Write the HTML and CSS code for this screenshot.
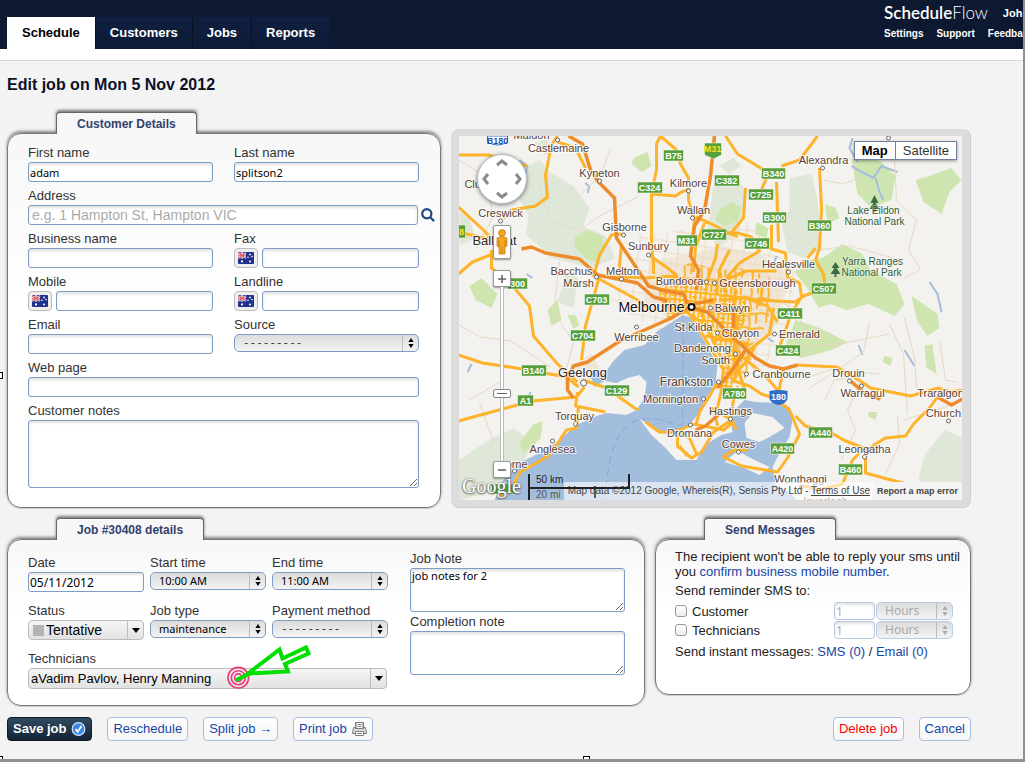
FILE: index.html
```
<!DOCTYPE html>
<html lang="en">
<head>
<meta charset="utf-8">
<title>ScheduleFlow - Edit job</title>
<link rel="stylesheet" href="styles.css">
</head>
<body>
<svg class="sprite" aria-hidden="true">
  <symbol id="updown" viewBox="0 0 6 10"><path d="M3 0 5.6 4H.4ZM3 10 .4 6h5.2Z"/></symbol>
  <symbol id="down" viewBox="0 0 8 5"><path d="M0 0h8L4 5Z"/></symbol>
  <symbol id="flag" viewBox="0 0 16 12">
    <rect width="16" height="12" rx="1" fill="#20338c"/>
    <path d="M0 1l8 5M8 1 0 6" stroke="#fff" stroke-width="1.6"/>
    <path d="M4 0v6.500M0 3.300h8" stroke="#fff" stroke-width="2.400"/>
    <path d="M4 0v6.500M0 3.300h8M0 1l8 5M8 1 0 6" stroke="#e2505e" stroke-width="1"/>
    <g fill="#fff"><circle cx="4" cy="9.400" r="1.100"/><circle cx="12" cy="2.400" r=".9"/><circle cx="10" cy="5.300" r=".8"/><circle cx="14" cy="4.600" r=".8"/><circle cx="12" cy="9.500" r="1"/></g>
  </symbol>
</svg>

<div class="page">
  <header class="topbar">
    <nav class="tabs">
      <a class="tab active" href="#">Schedule</a>
      <a class="tab" href="#">Customers</a>
      <a class="tab" href="#">Jobs</a>
      <a class="tab" href="#">Reports</a>
    </nav>
    <div class="account">
      <div class="account-row brand-row"><span class="brand">Schedule<span class="thin">Flow</span></span><a class="user" href="#">John</a></div>
      <nav class="account-row links"><a href="#">Settings</a><a href="#">Support</a><a href="#">Feedback</a></nav>
    </div>
  </header>
  <div class="strip"></div>

  <main class="content">
    <h1>Edit job on Mon 5 Nov 2012</h1>

    <div class="row row-top">
      <section class="panel">
        <h2 class="panel-tab">Customer Details</h2>
        <div class="card customer">
          <div class="field"><label for="first">First name</label><input id="first" type="text" value="adam"></div>
          <div class="field"><label for="last">Last name</label><input id="last" type="text" value="splitson2"></div>
          <div class="field wide"><label for="address">Address</label>
            <div class="with-search"><input id="address" class="large" type="text" placeholder="e.g. 1 Hampton St, Hampton VIC">
              <button type="button" class="search" aria-label="Search address"><svg viewBox="0 0 14 14"><circle cx="5.800" cy="5.800" r="4.600"/><path d="m9.300 9.300 3.800 3.800"/></svg></button></div>
          </div>
          <div class="field"><label for="business">Business name</label><input id="business" type="text"></div>
          <div class="field"><label for="fax">Fax</label><div class="phone"><button type="button" class="flag" aria-label="Australia"><svg><use href="#flag"/></svg></button><input id="fax" type="text"></div></div>
          <div class="field"><label for="mobile">Mobile</label><div class="phone"><button type="button" class="flag" aria-label="Australia"><svg><use href="#flag"/></svg></button><input id="mobile" type="text"></div></div>
          <div class="field"><label for="landline">Landline</label><div class="phone"><button type="button" class="flag" aria-label="Australia"><svg><use href="#flag"/></svg></button><input id="landline" type="text"></div></div>
          <div class="field"><label for="email">Email</label><input id="email" type="text"></div>
          <div class="field"><label for="source">Source</label><div class="select"><select id="source" class="blank"><option>---------</option></select><svg><use href="#updown"/></svg></div></div>
          <div class="field wide"><label for="web">Web page</label><input id="web" type="text"></div>
          <div class="field wide"><label for="notes">Customer notes</label><textarea id="notes" class="tall"></textarea></div>
        </div>
      </section>

      <section class="map" aria-label="Map">
        <div class="map-view">
          <svg class="map-art" viewBox="459 136 504 364" preserveAspectRatio="xMidYMid slice">
            <defs>
              <pattern id="streets" width="10" height="9" patternUnits="userSpaceOnUse" patternTransform="rotate(6)">
                <path d="M0 2h10M3 0v9M0 7h5M8 2v7" fill="none" stroke="#ffb41c" stroke-width="2"/>
              </pattern>
              <pattern id="suburbs" width="17" height="15" patternUnits="userSpaceOnUse" patternTransform="rotate(4)">
                <path d="M0 4l8 2 9-2M6 0l-1 8 1 7M12 5v10" fill="none" stroke="#fdb32a" stroke-width="2"/>
              </pattern>
              <pattern id="lanes" width="13" height="11" patternUnits="userSpaceOnUse" patternTransform="rotate(8)">
                <path d="M0 3h13M5 0v11" fill="none" stroke="#ecd9bf" stroke-width="1"/>
              </pattern>
            </defs>
            <rect x="459" y="136" width="504" height="364" fill="#f4f2ee"/>
            <g fill="#dfe8d8">
              <path d="M518 172l22-12 10 12 24 14 16 22-6 18-30 8-24-18-14-22zM530 212l34 6 42 18 10 22-24 10-40-10-26-24zM568 268l10 10-4 30-16-6zM714 185l20-8 14 14-8 40-22 18-10-20zM790 178l22-4 6 24 4 52-18 8-16-6-6-30 8-12zM720 166l14-8 8 8-12 8zM535 143l12-4 12 12-14 4zM460 212l10 6 6 20-16 8zM925 455l20-25 18 8v45l-34 6-10-10zM489 440l25-12 20 14-10 20-30 30-35 8v-40z"/>
            </g>
            <g fill="#cfe5b0">
              <path d="M575 238l12-8 16 6 2 14-6 12-12-2-12-14zM470 286l12-8 16 16-6 14-16-8zM634 158l14-6 4 14-10 6-10-8zM720 210l12-8 10 6-4 14-14 4-8-6zM852 160l10-8 20 10 14 14-4 24-20 8-14-14zM930 176l22-8 10 12-12 12-8 22-18-12-8-22zM826 204l10 4 4 10-12 6-2-14zM795 272l14-12 14-2 20-14 20 10 8 16 26 14 8 20-10 12-26-12-22 6-16-6-12 4-10-18zM796 320l24 8 28 14-16 8-30 8-18-8zM912 296l26 18 2 14-12 8-10-14zM925 346l8-2 4 30-10-6zM885 356l8 2-2 8-8-4zM870 412l8 0-2 8-8-4zM548 310l10-10 4 20-10 6zM533 425l10-4-2 18-16 14-6-8zM568 315l8 0 4 10-6 4zM757 222l12 6-2 10-12-4z"/>
            </g>
            <g fill="#efe6d8">
              <path d="M650 262l40-8 34-8 40 10 26 20-10 44-34 40-14 28-10-14 6-24-16-28-22-14-24 8-20-12zM578 362l14-8 8 14-8 14-14-4z"/>
            </g>
            <path fill="url(#lanes)" d="M640 235l110-12 48 52-10 44-28 60-120-60-30-16z"/>

            <path fill="#a3bddd" d="M495 500 505 478 522 462 540 453 557 443 577 425 597 416 608 413 627 415 637 410 645 398 647 382 640 375 628 378 617 383 605 381 595 387 590 373 600 371 608 376 607 371 613 362 625 350 645 345 658 331 673 322 683 315 690 317 697 328 707 345 718 365 716 385 705 400 698 415 690 425 672 434 660 433 645 422 640 419 652 435 665 447 677 460 697 460 705 445 722 435 733 432 731 420 735 410 745 400 757 402 777 403 790 407 793 420 790 437 780 453 773 467 776 478 775 484 790 492 797 500Z"/>
            <path fill="#f4f2ee" d="m725 462 13-11 15 8 17 8-10 8-15-7ZM745 423l8-10 20 4 12 11-15 9-10 5-13-4Z"/>
            <path fill="none" stroke="#8aa5d3" stroke-dasharray="8 4" d="M605 500c4-32 6-72 34-80 24-6 40 10 44 4l1-104"/>
            <g fill="none" stroke="#a3bddd" stroke-width="2">
              <path d="M852 166l10 6 12 6 8-12 16 6M876 178l4 14 4 8M853 138l-3 10 8 14M586 183l4 4-2 6M930 282l8 12 4 18M905 350l10 16M859 345l4 10M773 268l4-12M527 274l6 4M531 392l-4 10M468 372l4-8M818 432l0 2M768 338l6 4M520 160l8 6-2 8"/>
            </g>
            <g fill="none" stroke="#e6d8c4">
              <path d="M459 160l30 18 4 40-16 30M540 188l10 32 30 10 20-14 40-20M610 150l-8 24-20 20M560 262l-6 50 20 30-8 30M459 325l22 12 30 4 40 26M470 400l34-20M480 402l14 40-24 30M870 322l-6 30-26 18-28 18M890 324l14 30 4 60M905 318l10 40 2 30M862 380l-14 30 8 20-14 30M825 400l10-20 30-4M898 416l2 28-14 30M895 160l2 40 20 20-8 30 12 20-16 8M940 340l6 40 12 2M824 180l20 4 20-8M820 250l30-4 44 12M780 300l14 10 20 30M780 348l60-4 50-10M800 380l30-10 50 4M905 420l44-14"/>
            </g>

            <path fill="url(#streets)" d="M658 292 672 276 700 280 728 282 746 296 748 318 738 334 744 366 730 392 722 388 722 354 704 326 690 314 680 314 668 318Z"/>
            <path fill="url(#suburbs)" d="M690 262 720 270 740 268 770 276 774 306 764 330 752 346 752 370 738 388 730 380 736 340 728 300 700 284 660 284Z"/>

            <g fill="none" stroke="#fdb32a" stroke-width="3" stroke-linejoin="round">
              <path d="M459 155l30 0 38 11M459 207l26 24 14 16M459 232l34 8M459 274l14-12 20-8 4-10M492 250l0 18 18 14 20 24 4 30 24 28 20 18M504 218l8-8 24-4 12-9-2-22 6-30 6-9M558 142l18 6 10 20"/>
              <path d="M661 136l-4 8 0 26-5 24 0 50 2 20 0 10M661 136l16 14 4 14 8 14 0 22 6 20-2 18M652 194l24 2 6-4 6-2M726 136l12 18 30 18 14 4M782 166l18-6 18-24M768 176l-8 18M777 182l2 60M772 225v24l14 4 2 24 12 6 2 14-10 16-12 34M746 188l-2 30-14 17M820 168l2 40-2 40-4 12 8 14 2 14-22 8-8 6-40-2M816 248l-8 10"/>
              <path d="M696 217l14 6 28 14M710 234l28-1 14 4 8 14-20 12-14 16M777 271l-30 0-24 10M706 220l-10 28-2 24M718 244l-2 14-8 22M730 250l-10 20 4 18M600 276l-14 50-4 34M606 276l40 2 30-2M598 278l40 22 16 12M622 234l-10 1-12 20-6 22M622 244l-2 22 2 12M648 254l20 14 10 8"/>
              <path d="M459 355l24 8 40 6 44 8 12 10M459 421l44-12 30-8 44-4 8-10M583 380l24 8 28 20 4 2M578 392l-2 14 30 6M579 406l-2 22-10 2-8 12-10 14-28 16-8 14-14 12"/>
              <path d="M742 356l24 20 12 14M784 368l-4 20-2 12 12 10 10 24-12 24-10 14-36-6-18-9 10-7 14 0M796 416l10 10 28 8 10 6 10 4 14 6M732 380l18 6 12 8 18 6M863 450l-10 10-10 24-24 6-14-4M866 455l0 18 22 6 16 4M866 452l10-8 10-6 20-2 8-12 16-16 10-14 22-4"/>
              <path d="M797 365l40 2 24 14 10 7 40 8 28-8 18 6M718 382l-8 14-10 16-4 14M715 388l30-24 10-16M722 390l-6 26 2 10M735 394l-4 24 6 12M712 408l20 12-18 12-12 20-10 6-14-12 0-16 12 8 8 18M680 446l8 10M694 424l30 6 10-8M646 422l14 10 16 0 18-8"/>
              <path d="M690 314l14 22 20 34-2 20M700 308l10 26 12 24M706 336l24 4 20 6M738 306l-4 50 12 36M720 300l26-2 22 8 10 16M750 350l20-16 4-26M676 305l30 20M764 280l-4 26"/>
            </g>
            <g fill="none" stroke="#ee8c2b" stroke-width="3.500" stroke-linejoin="round">
              <path d="M569 136l14 8 8 26 8 12 16 16 2 40 8 12 24 36 20 6M522 249l10-2 14 6 34 6 18 16 40 8 16 14 14 4M715 136l-4 40-6 34-10 16-4 30 8 14-2 20M692 306l-20 12-36 16-14 6-34 22-14 4-6 14 0 10 6 8M694 308l14 4 24 24 24 22 14 8 14 3 14-4M734 304l0 24M746 350l-12 18-16 20M722 412l-16 14-10 4M851 381l14 12 16 6M938 397l14 8 11-6M660 290l24 4 4 10M694 304l20-4"/>
            </g>

            <g class="city-dots">
              <circle cx="558" cy="140" r="2"/><circle cx="600" cy="181" r="2"/><circle cx="689" cy="191" r="2"/><circle cx="501" cy="221" r="2"/><circle cx="693" cy="218" r="2"/><circle cx="624" cy="235" r="2"/><circle cx="649" cy="255" r="2"/><circle cx="597" cy="277" r="2"/><circle cx="622" cy="279" r="2"/><circle cx="707" cy="282" r="2"/><circle cx="715" cy="283" r="2"/><circle cx="637" cy="327" r="2"/><circle cx="584" cy="383" r="3"/><circle cx="576" cy="424" r="2"/><circle cx="553" cy="441" r="2"/><circle cx="823" cy="168" r="2"/><circle cx="789" cy="272" r="2"/><circle cx="711" cy="308" r="2"/><circle cx="718" cy="333" r="2"/><circle cx="775" cy="334" r="2"/><circle cx="736" cy="354" r="2"/><circle cx="747" cy="374" r="2"/><circle cx="719" cy="382" r="2"/><circle cx="704" cy="399" r="2"/><circle cx="731" cy="419" r="2"/><circle cx="691" cy="425" r="2"/><circle cx="739" cy="452" r="2"/><circle cx="850" cy="381" r="2"/><circle cx="862" cy="386" r="2"/><circle cx="865" cy="457" r="2"/><circle cx="949" cy="421" r="2"/><circle cx="802" cy="487" r="2"/><circle cx="515" cy="471" r="2"/><circle cx="889" cy="138" r="2"/>
              <circle cx="692" cy="307" r="3" stroke="#111" stroke-width="2"/>
            </g>

            <g class="places">
              <text x="532" y="139">Maldon</text><text x="559" y="152">Castlemaine</text><text x="600" y="177">Kyneton</text><text x="689" y="187">Kilmore</text><text x="482" y="188">Clunes</text>
              <text x="501" y="217">Creswick</text><text x="694" y="214">Wallan</text><text x="625" y="231">Gisborne</text><text x="649" y="250">Sunbury</text>
              <text x="572" y="275">Bacchus</text><text x="579" y="287">Marsh</text><text x="623" y="275">Melton</text><text x="680" y="285">Bundoora</text><text x="758" y="287">Greensborough</text>
              <text x="789" y="268">Healesville</text><text x="824" y="164">Alexandra</text><text x="733" y="312">Balwyn</text><text x="694" y="331">St Kilda</text><text x="741" y="337">Clayton</text><text x="800" y="338">Emerald</text>
              <text x="637" y="341">Werribee</text><text x="703" y="352">Dandenong</text><text x="716" y="364">South</text><text x="782" y="378">Cranbourne</text><text x="671" y="403">Mornington</text>
              <text x="731" y="415">Hastings</text><text x="690" y="437">Dromana</text><text x="739" y="448">Cowes</text><text x="575" y="420">Torquay</text><text x="553" y="453">Anglesea</text><text x="514" y="468">Lorne</text>
              <text x="849" y="377">Drouin</text><text x="863" y="397">Warragul</text><text x="941" y="397">Traralgon</text><text x="944" y="417">Church</text><text x="865" y="453">Leongatha</text><text x="801" y="483">Wonthaggi</text><text x="826" y="505">Inverloch</text>
              <g class="mid"><text x="495" y="245">Ballarat</text><text x="583" y="377">Geelong</text></g>
              <text class="town" x="687" y="386">Frankston</text>
              <text class="capital" x="652" y="312">Melbourne</text>
            </g>
            <g class="parks">
              <path d="M875 195l4 8h-3l4 6h-4v3h-2v-3h-4l4-6h-3zM836 262l4 6h-3l4 6h-4v3h-2v-3h-4l4-6h-3z"/>
              <text x="874" y="214">Lake Eildon</text><text x="875" y="225">National Park</text><text x="873" y="265">Yarra Ranges</text><text x="872" y="276">National Park</text>
            </g>

            <g class="shield-boxes">
              <path d="M664 150h20v11h-20zM638 182h25v11h-25zM715 175h25v11h-25zM762 168h24v11h-24zM749 189h25v11h-25zM763 212h24v11h-24zM808 220h24v11h-24zM677 235h21v11h-21zM702 229h25v11h-25zM745 238h25v11h-25zM812 283h25v11h-25zM778 308h25v11h-25zM776 345h25v11h-25zM585 294h25v11h-25zM571 330h25v11h-25zM522 365h25v11h-25zM605 385h25v11h-25zM518 395h16v11h-16zM723 388h24v11h-24zM809 427h24v11h-24zM771 443h24v11h-24zM839 464h24v11h-24zM508 278h20v11h-20zM492 484h25v10h-25zM459 225h7v13h-7zM705 143h17v12l-8 4-9-4z"/>
            </g>
            <g class="shields">
              <text x="674" y="159">B75</text><text x="650" y="191">C324</text><text x="727" y="184">C382</text><text x="774" y="177">B340</text><text x="761" y="198">C725</text><text x="775" y="221">B300</text><text x="820" y="229">B360</text><text x="687" y="244">M31</text><text x="714" y="238">C727</text><text x="757" y="247">C746</text><text x="824" y="292">C507</text><text x="790" y="317">C411</text><text x="788" y="354">C424</text><text x="597" y="303">C703</text><text x="583" y="339">C704</text><text x="534" y="374">B140</text><text x="617" y="394">C129</text><text x="526" y="404">A1</text><text x="735" y="397">A780</text><text x="821" y="436">A440</text><text x="783" y="452">A420</text><text x="851" y="473">B460</text><text x="518" y="287">300</text>
              <g class="gold"><text x="713" y="152">M31</text><text x="462" y="235">8</text></g>
            </g>
            <path fill="#2f6fc7" d="M770 391q9-2 18 0v8q-2 5-9 6-7-1-9-6z"/>
            <path fill="#fff" stroke="#2f6fc7" d="M488 136h20v6q-10 6-20 0z"/>
            <g class="shields"><text x="779" y="400">180</text><text x="498" y="144" class="blue">B180</text></g>
          </svg>

          <div class="map-type"><button type="button" class="on">Map</button><button type="button">Satellite</button></div>

          <div class="map-nav">
            <svg class="pan" viewBox="0 0 50 50" aria-label="Pan"><circle cx="25" cy="25" r="24.500" fill="#fff" stroke="#bbb"/><path d="m20 11 5-4 5 4M20 39l5 4 5-4M11 20l-4 5 4 5M39 20l4 5-4 5" fill="none" stroke="#8a8a8a" stroke-width="3"/></svg>
            <button type="button" class="pegman" aria-label="Street View"><svg viewBox="0 0 12 26"><g fill="#f5a623" stroke="#b8720b" stroke-width=".7"><path d="M1 9q5-3 10 0v8l-2 1v7H3v-7l-2-1z"/><circle cx="6" cy="4" r="3.400"/><path d="M6 18v7M3 11v7M9 11v7"/></g></svg></button>
            <button type="button" class="zoom-btn" aria-label="Zoom in"><svg viewBox="0 0 10 10"><path d="M1 5h8M5 1v8"/></svg></button>
            <input class="zoom-range" type="range" min="0" max="21" value="8" aria-label="Zoom level">
            <button type="button" class="zoom-btn" aria-label="Zoom out"><svg viewBox="0 0 10 10"><path d="M1 5h8"/></svg></button>
          </div>

          <div class="map-foot">
            <span class="google">Google</span>
            <span class="scale"><span class="km">50 km</span><span class="mi">20 mi</span></span>
            <span class="legal"><span>Map data ©2012 Google, Whereis(R), Sensis Pty Ltd - <a href="#">Terms of Use</a></span><a class="report" href="#">Report a map error</a></span>
          </div>
        </div>
      </section>
    </div>

    <div class="row row-bottom">
      <section class="panel">
        <h2 class="panel-tab">Job #30408 details</h2>
        <div class="card job">
          <div class="job-fields">
            <div class="field"><label for="date">Date</label><input id="date" class="date" type="text" value="05/11/2012"></div>
            <div class="field"><label for="start">Start time</label><div class="select"><select id="start"><option>10:00 AM</option></select><svg><use href="#updown"/></svg></div></div>
            <div class="field"><label for="end">End time</label><div class="select"><select id="end"><option>11:00 AM</option></select><svg><use href="#updown"/></svg></div></div>
            <div class="field"><label for="status">Status</label><div class="select combo status"><span class="swatch"></span><select id="status"><option>Tentative</option></select><svg><use href="#down"/></svg></div></div>
            <div class="field"><label for="type">Job type</label><div class="select"><select id="type"><option>maintenance</option></select><svg><use href="#updown"/></svg></div></div>
            <div class="field"><label for="payment">Payment method</label><div class="select"><select id="payment" class="blank"><option>---------</option></select><svg><use href="#updown"/></svg></div></div>
            <div class="field wide"><label for="techs">Technicians</label><div class="select combo techs"><select id="techs"><option>aVadim Pavlov, Henry Manning</option></select><svg><use href="#down"/></svg>
              <svg class="pointer" viewBox="223 638 90 52"><g fill="none"><g stroke="#ea3a7a" stroke-width="1.600"><circle cx="238.300" cy="677.700" r="10.300"/><circle cx="238.300" cy="677.700" r="7"/><circle cx="238.300" cy="677.700" r="3.800"/></g><path d="M248 673.500 279.500 649.500 282.500 658.500 306 647.500 308.500 653.500 285 664 288 671.500Z" stroke="#00df00" stroke-width="4"/><path d="M236 680 254 672" stroke="#00df00" stroke-width="4"/></g></svg></div></div>
          </div>
          <div class="job-notes">
            <div class="field"><label for="jobnote">Job Note</label><textarea id="jobnote">job notes for 2</textarea></div>
            <div class="field"><label for="donenote">Completion note</label><textarea id="donenote"></textarea></div>
          </div>
        </div>
      </section>

      <section class="panel">
        <h2 class="panel-tab">Send Messages</h2>
        <div class="card messages">
          <p>The recipient won't be able to reply your sms until you <a href="#">confirm business mobile number</a>.</p>
          <p>Send reminder SMS to:</p>
          <div class="reminders">
            <div class="reminder"><input id="rc" type="checkbox"><label for="rc">Customer</label><input type="text" value="1" disabled aria-label="Customer reminder amount"><div class="select off"><select disabled aria-label="Customer reminder unit"><option>Hours</option></select><svg><use href="#updown"/></svg></div></div>
            <div class="reminder"><input id="rt" type="checkbox"><label for="rt">Technicians</label><input type="text" value="1" disabled aria-label="Technician reminder amount"><div class="select off"><select disabled aria-label="Technician reminder unit"><option>Hours</option></select><svg><use href="#updown"/></svg></div></div>
          </div>
          <p>Send instant messages: <a href="#">SMS (0)</a> / <a href="#">Email (0)</a></p>
        </div>
      </section>
    </div>

    <div class="actions">
      <button type="submit" class="btn primary">Save job <svg viewBox="0 0 14 14"><circle cx="7" cy="7" r="6.300" fill="#3b86e8" stroke="#d5e6fb" stroke-width="1.200"/><path d="m4 7.200 2.200 2.600L10 4" fill="none" stroke="#fff" stroke-width="1.800"/></svg></button>
      <button type="button" class="btn">Reschedule</button>
      <button type="button" class="btn">Split job →</button>
      <button type="button" class="btn">Print job <svg viewBox="0 0 15 14"><g fill="#fff" stroke="#7d7d7d"><path d="M3.500 7V.5h8V7M1.500 5.500h12l1 6H.5z" fill="#ddd"/><path d="M4 .5h7v6H4zM3.500 9.500h8v4h-8z"/><path d="M5.500 2.500h4M5.500 4.500h4M5 11.500h5"/></g></svg></button>
      <span class="spacer"></span>
      <button type="button" class="btn danger">Delete job</button>
      <button type="button" class="btn">Cancel</button>
    </div>
  </main>

  <span class="handle left"></span>
  <span class="handle corner"></span>
  <span class="handle bottom"></span>
</div>
</body>
</html>
```
FILE: styles.css
```
* { box-sizing: border-box; }

body {
  margin: 0;
  background: #f3f3f3;
  color: #333;
  font: 13px/16px "Liberation Sans", Arial, sans-serif;
}

a { color: #1446a8; text-decoration: none; }
input, select, textarea, button { font: inherit; color: inherit; margin: 0; }
svg { display: block; }
.sprite { position: absolute; width: 0; height: 0; }

.page {
  position: relative;
  min-height: 100vh;
  border-right: 2px solid #8f9192;
  border-bottom: 3px solid #929292;
  overflow: hidden;
}

/* Header */
.topbar {
  display: flex;
  align-items: flex-end;
  justify-content: space-between;
  height: 49px;
  padding-left: 7px;
  background: #0d1831;
}
.tabs { display: flex; }
.tab {
  padding: 0 14px;
  line-height: 32px;
  font-weight: bold;
  color: #fff;
  background: linear-gradient(#0f2040, #0c1a36);
  border-left: 1px solid #081022;
}
.tab.active { padding: 0 15px; background: #fff; color: #000; border-left: 0; }
.account {
  align-self: stretch;
  width: 139px;
  padding-top: 3px;
  overflow: hidden;
  white-space: nowrap;
}
.account-row { display: flex; gap: 13px; font-size: 11px; font-weight: bold; }
.account-row a { color: #fff; }
.brand-row { align-items: center; gap: 15px; height: 20px; }
.brand { font: 600 17px/20px Lato, sans-serif; color: #fff; }
.brand .thin { font-weight: 300; }
.links { padding-top: 3px; font-size: 10px; }
.strip { height: 12px; background: #fff; border-bottom: 1px solid #c9dadd; }

/* Layout */
.content { padding: 14px 52px 16px 7px; }
h1 { margin: 0 0 17px; font-size: 16px; line-height: 20px; color: #0a1128; }
.row { display: grid; gap: 10px; }
.row-top { grid-template-columns: 434fr 520fr; }
.row-bottom { grid-template-columns: 638fr 316fr; align-items: start; margin-top: 10px; }

/* Panels */
.panel { min-width: 0; }
.panel-tab {
  position: relative;
  z-index: 1;
  width: fit-content;
  height: 22px;
  margin: 0 0 -1px 49px;
  padding: 0 20px;
  font-size: 12px;
  line-height: 22px;
  color: #33416c;
  background: #f7f7f7;
  border: 1px solid #666;
  border-bottom: 0;
  border-radius: 4px 4px 0 0;
  box-shadow: 0 -2px 3px rgba(0, 0, 0, .5);
  clip-path: inset(-8px -8px 0 -8px);
}
.card {
  border: 1px solid #777;
  border-radius: 14px;
  background: linear-gradient(#f7f7f7, #fff 45%);
  box-shadow: 0 -2px 3px rgba(0, 0, 0, .45), 0 1px 1px rgba(0, 0, 0, .15);
}
.customer {
  display: grid;
  grid-template-columns: 1fr 1fr;
  gap: 6px 21px;
  padding: 11px 21px 19px 20px;
}
.wide { grid-column: 1 / -1; }

/* Fields */
.field { display: grid; gap: 1px; align-content: start; min-width: 0; }
input[type="text"], textarea {
  width: 100%;
  min-width: 0;
  height: 20px;
  padding: 0 1px;
  border: 1px solid #7c9dc6;
  border-radius: 3px;
  background: #fff;
  box-shadow: inset 0 2px 3px rgba(0, 0, 0, .12);
  font: 11px/14px "Noto Sans", sans-serif;
  color: #000;
}
textarea { display: block; height: 44px; resize: vertical; }
textarea.tall { height: 68px; }
input.large { padding-left: 3px; font: 14px/18px "Liberation Sans", Arial, sans-serif; }
input.date { font-size: 12px; }
::placeholder { color: #aaa; }
.with-search { display: flex; gap: 3px; margin-right: -16px; align-items: center; }
.search { flex: none; width: 14px; height: 14px; padding: 0; border: 0; background: none; }
.search svg { width: 14px; height: 14px; fill: none; stroke: #1d4a80; stroke-width: 2.2; }
.phone { display: flex; gap: 4px; }
.flag {
  display: grid;
  place-items: center;
  flex: none;
  width: 24px;
  height: 20px;
  padding: 0;
  border: 1px solid #bbb;
  border-radius: 4px;
  background: #eee;
}
.flag svg { width: 16px; height: 12px; }

.select { position: relative; height: 18px; }
.select select {
  display: block;
  width: 100%;
  height: 100%;
  padding: 0 20px 0 8px;
  appearance: none;
  border: 1px solid #7c9dc6;
  border-radius: 5px;
  background: linear-gradient(90deg, transparent calc(100% - 16px), #bbb calc(100% - 16px), #bbb calc(100% - 15px), transparent calc(100% - 15px)), linear-gradient(#dcdcdc, #f3f3f3);
  font: 11px/14px "Noto Sans", sans-serif;
  color: #000;
}
.select .blank { font-family: "Liberation Mono", monospace; color: #333; }
.select svg { position: absolute; top: 4px; right: 5px; width: 6px; height: 10px; pointer-events: none; }
.combo { height: 20px; }
.combo select {
  padding: 0 20px 0 2px;
  border-color: #bbb;
  border-radius: 4px;
  background: linear-gradient(90deg, transparent calc(100% - 16px), #bbb calc(100% - 16px), #bbb calc(100% - 15px), transparent calc(100% - 15px)), linear-gradient(#f5f5f5, #e2e2e2);
  font: 13px/16px "Liberation Sans", Arial, sans-serif;
}
.combo svg { top: 8px; right: 4px; width: 8px; height: 5px; }
.status select { padding-left: 17px; font-size: 14px; }
.swatch { position: absolute; top: 5px; left: 5px; width: 11px; height: 11px; background: #b4b4b4; }
.techs { height: 21px; margin-right: 1px; }
.select .pointer { top: -30px; left: 195px; width: 90px; height: 52px; }

/* Job */
.job { display: grid; grid-template-columns: 360fr 215fr; gap: 22px; padding: 11px 19px 16px 20px; }
.job-fields { display: grid; grid-template-columns: repeat(3, 1fr); gap: 11px 6px; padding-top: 4px; }
.job-notes { display: grid; gap: 2px; align-content: start; }

/* Messages */
.messages { padding: 9px 4px 31px 19px; line-height: 15px; }
.messages p { margin: 0 0 4px; color: #222; }
.reminders { display: grid; gap: 1px; margin: 0 12px 5px 0; }
.reminder { display: flex; align-items: center; color: #222; }
.reminder label { flex: 1; padding-left: 5px; }
.reminder input[type="checkbox"] {
  appearance: none;
  width: 12px;
  height: 12px;
  border: 1px solid #999;
  border-radius: 3px;
  background: linear-gradient(#fff, #eee);
}
.reminder input[type="text"] { width: 41px; height: 18px; margin-right: 1px; border-color: #b9cbe2; font-size: 12px; color: #aaa; }
.off { width: 77px; margin-right: 1px; }
.off select { border-color: #b9cbe2; font-size: 12px; line-height: 16px; color: #aaa; opacity: 1; }
.off svg { fill: #aaa; }

/* Buttons */
.actions { display: flex; gap: 15px; margin-top: 11px; }
.spacer { flex: 1; }
.btn {
  display: flex;
  align-items: center;
  gap: 5px;
  height: 24px;
  padding: 0 5px;
  border: 1px solid #a9bfdf;
  border-radius: 4px;
  background: linear-gradient(#fff, #f5f5f5);
  color: #1446a8;
}
.btn svg { width: 15px; height: 14px; }
.btn.primary { border-color: #0f1c2b; background: linear-gradient(#2f4a60, #142436); color: #fff; font-weight: bold; }
.btn.danger { color: #f00; }

/* Map */
.map { display: flex; margin-top: 17px; padding: 7px 8px; border: 1px solid #ccc; border-width: 0 1px 1px 0; border-radius: 8px; background: #dcdcdc; }
.map-view { position: relative; flex: 1; overflow: hidden; background: #f4f2ee; }
.map-art { position: absolute; inset: 0; width: 100%; height: 100%; }
.map-art text { text-anchor: middle; }
.places text { font-size: 11px; fill: #554038; stroke: #fff; stroke-width: 2px; stroke-opacity: .8; paint-order: stroke; }
.places .mid text { font-size: 13px; fill: #33261f; }
.places .town { font-size: 12px; }
.places .capital { font-size: 14px; fill: #111; }
.parks text { font-size: 10px; fill: #2c5c38; stroke: #fff; stroke-width: 1px; stroke-opacity: .6; paint-order: stroke; }
.parks path { fill: #3a6b48; }
.city-dots { fill: #fff; stroke: #666; }
.shield-boxes { fill: #58a03c; stroke: #fff; stroke-width: .5; }
.shields { font-size: 9px; font-weight: bold; fill: #fff; }
.shields .gold { fill: #ffe11a; }
.shields .blue { fill: #1c55b0; }

.map-type { position: absolute; top: 5px; right: 5px; display: flex; border: 1px solid #7180a0; background: #fff; box-shadow: 0 1px 3px rgba(0, 0, 0, .4); }
.map-type button { padding: 0 7px; line-height: 17px; border: 0; background: #fff; color: #333; }
.map-type .on { font-weight: bold; color: #000; border-right: 1px solid #7180a0; }

.map-nav { position: absolute; top: 18px; left: 18px; display: flex; flex-direction: column; align-items: center; }
.pan { width: 50px; height: 50px; filter: drop-shadow(0 1px 2px rgba(0, 0, 0, .5)); }
.pegman, .zoom-btn { display: grid; place-items: center; padding: 0; border: 1px solid #999; border-radius: 2px; background: #fff; box-shadow: 0 1px 2px rgba(0, 0, 0, .4); }
.pegman { width: 18px; height: 34px; margin: 21px 0 11px; }
.pegman svg { width: 12px; height: 26px; }
.zoom-btn { width: 18px; height: 17px; }
.zoom-btn svg { width: 10px; height: 10px; stroke: #666; stroke-width: 1.6; }
.zoom-range {
  appearance: none;
  width: 18px;
  height: 174px;
  writing-mode: vertical-lr;
  direction: rtl;
  background: linear-gradient(90deg, transparent 7px, #777 7px, #fff 8px, #fff 10px, #777 11px, transparent 11px);
}
.zoom-range::-webkit-slider-thumb {
  appearance: none;
  width: 18px;
  height: 9px;
  border: 1px solid #888;
  border-radius: 2px;
  background: linear-gradient(#666, #666) center / 10px 1px no-repeat #fff;
}

.map-foot { position: absolute; right: 0; bottom: 0; left: 0; display: flex; align-items: flex-end; height: 28px; }
.google { width: 69px; padding-left: 3px; font: 20px/28px "Liberation Serif", serif; color: #fff; text-shadow: 0 0 2px #555, 0 1px 2px #555; }
.scale { position: relative; z-index: 1; display: grid; flex: none; width: 102px; height: 26px; align-content: start; padding-left: 6px; border-left: 2px solid #222; font-size: 10px; line-height: 12px; color: #222; }
.scale::after { content: ""; position: absolute; top: 0; right: 0; left: 0; height: 13px; border: solid #222; border-width: 0 2px 2px 0; }
.scale::before { content: ""; position: absolute; top: 12px; left: 64px; height: 12px; border-left: 2px solid #555; }
.scale .mi { padding-top: 3px; color: #555; }
.legal { position: absolute; right: 0; bottom: 0; display: flex; align-items: center; height: 18px; padding-left: 4px; font-size: 10px; white-space: nowrap; color: #444; background: rgba(255, 255, 255, .6); }
.legal a { color: #444; text-decoration: underline; }
.legal .report { margin-left: 3px; padding: 0 4px; line-height: 18px; font-size: 9px; font-weight: bold; text-decoration: none; background: #f4f4f4; }

/* Selection handles on the window frame */
.handle { position: absolute; width: 7px; height: 7px; border: 1px solid #000; background: #fff; }
.handle.left { left: -4px; top: 49%; }
.handle.corner { left: -4px; bottom: -4px; }
.handle.bottom { left: 57%; bottom: -4px; }
```
